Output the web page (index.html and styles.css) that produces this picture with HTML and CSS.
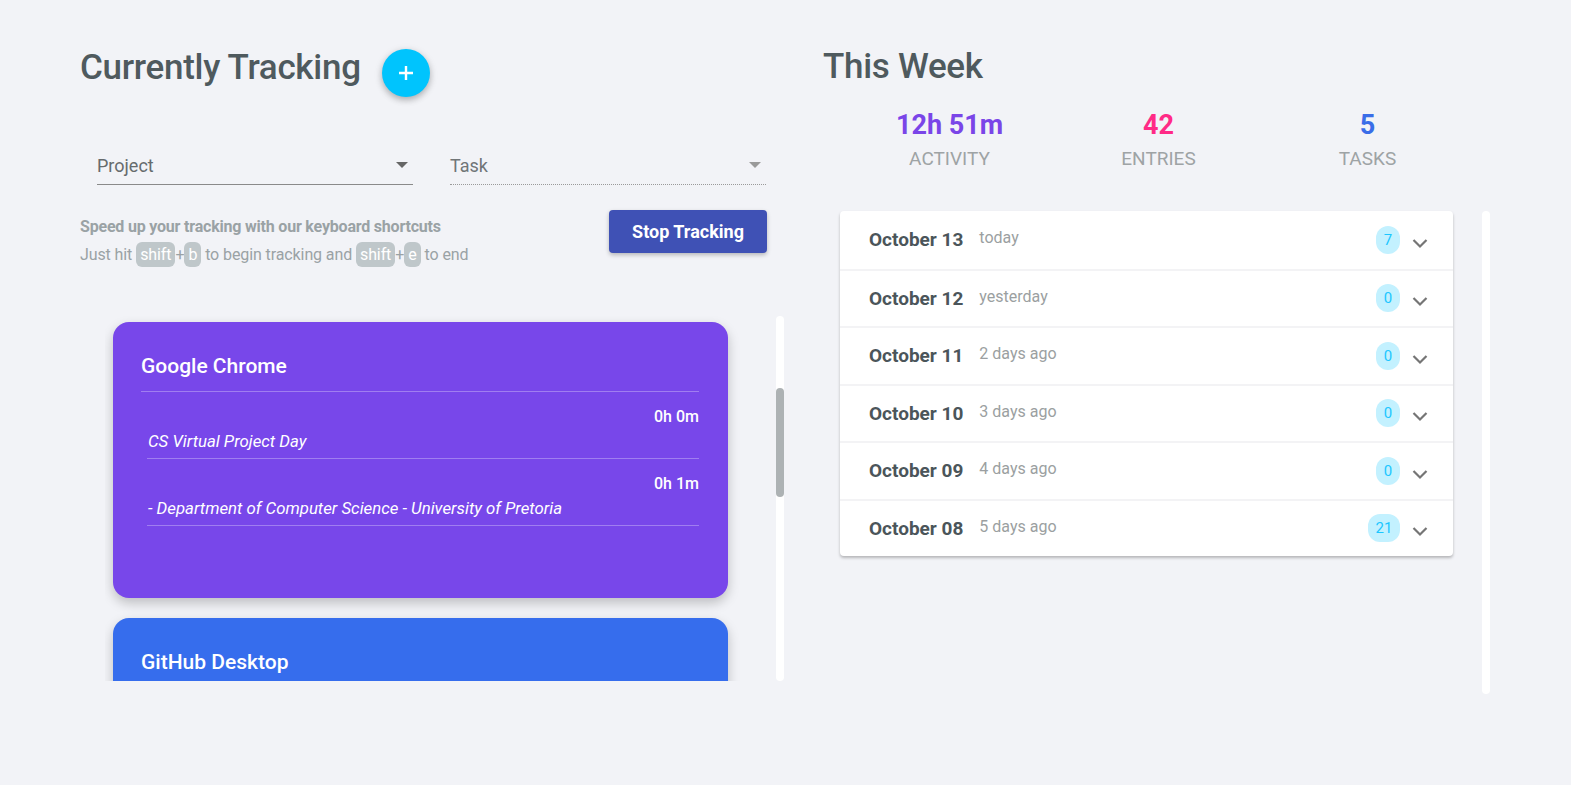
FILE: index.html
```html
<!DOCTYPE html>
<html>
<head>
<meta charset="utf-8">
<link rel="stylesheet" href="styles.css">
</head>
<body>
<div class="page">
  <section class="left">
    <div class="head-row">
      <h1 class="title">Currently Tracking</h1>
      <button class="fab">
        <svg width="20" height="20" viewBox="0 0 20 20"><path d="M10 3v14M3 10h14" stroke="#fff" stroke-width="2.4"/></svg>
      </button>
    </div>
    <div class="selects">
      <div class="select solid">
        <span class="sel-label">Project</span>
        <svg class="caret" width="12" height="6" viewBox="0 0 12 6"><path d="M0 0h12L6 6z" fill="#666"/></svg>
      </div>
      <div class="select dotted">
        <span class="sel-label">Task</span>
        <svg class="caret" width="12" height="6" viewBox="0 0 12 6"><path d="M0 0h12L6 6z" fill="#9a9a9a"/></svg>
      </div>
    </div>
    <div class="shortcut-row">
      <div class="shortcuts">
        <div class="sc-title">Speed up your tracking with our keyboard shortcuts</div>
        <div class="sc-line">Just hit <span class="kbd">shift</span>+<span class="kbd">b</span> to begin tracking and <span class="kbd">shift</span>+<span class="kbd">e</span> to end</div>
      </div>
      <button class="stop">Stop Tracking</button>
    </div>
    <div class="scroll-area">
      <div class="cards">
        <div class="card purple">
          <div class="card-title">Google Chrome</div>
          <div class="entry">
            <div class="entry-time">0h 0m</div>
            <div class="entry-name">CS Virtual Project Day</div>
          </div>
          <div class="entry">
            <div class="entry-time">0h 1m</div>
            <div class="entry-name">- Department of Computer Science - University of Pretoria</div>
          </div>
        </div>
        <div class="card blue">
          <div class="card-title">GitHub Desktop</div>
        </div>
      </div>
      <div class="track"><div class="thumb"></div></div>
    </div>
  </section>
  <section class="right">
    <h1 class="title week">This Week</h1>
    <div class="stats">
      <div class="stat"><div class="stat-val c-purple">12h 51m</div><div class="stat-label">Activity</div></div>
      <div class="stat"><div class="stat-val c-pink">42</div><div class="stat-label">Entries</div></div>
      <div class="stat"><div class="stat-val c-blue">5</div><div class="stat-label">Tasks</div></div>
    </div>
    <div class="list-row">
      <div class="days">
        <div class="day"><span class="date">October 13</span><span class="rel">today</span><span class="badge">7</span><svg class="chev" width="24" height="24" viewBox="0 0 24 24"><path d="M5.5 9 12 15.5 18.5 9" fill="none" stroke="#757575" stroke-width="2.2"/></svg></div>
        <div class="day"><span class="date">October 12</span><span class="rel">yesterday</span><span class="badge">0</span><svg class="chev" width="24" height="24" viewBox="0 0 24 24"><path d="M5.5 9 12 15.5 18.5 9" fill="none" stroke="#757575" stroke-width="2.2"/></svg></div>
        <div class="day"><span class="date">October 11</span><span class="rel">2 days ago</span><span class="badge">0</span><svg class="chev" width="24" height="24" viewBox="0 0 24 24"><path d="M5.5 9 12 15.5 18.5 9" fill="none" stroke="#757575" stroke-width="2.2"/></svg></div>
        <div class="day"><span class="date">October 10</span><span class="rel">3 days ago</span><span class="badge">0</span><svg class="chev" width="24" height="24" viewBox="0 0 24 24"><path d="M5.5 9 12 15.5 18.5 9" fill="none" stroke="#757575" stroke-width="2.2"/></svg></div>
        <div class="day"><span class="date">October 09</span><span class="rel">4 days ago</span><span class="badge">0</span><svg class="chev" width="24" height="24" viewBox="0 0 24 24"><path d="M5.5 9 12 15.5 18.5 9" fill="none" stroke="#757575" stroke-width="2.2"/></svg></div>
        <div class="day"><span class="date">October 08</span><span class="rel">5 days ago</span><span class="badge wide">21</span><svg class="chev" width="24" height="24" viewBox="0 0 24 24"><path d="M5.5 9 12 15.5 18.5 9" fill="none" stroke="#757575" stroke-width="2.2"/></svg></div>
      </div>
      <div class="track tall"></div>
    </div>
  </section>
</div>
</body>
</html>
```
FILE: styles.css
```css
* { box-sizing: border-box; }
html, body { margin: 0; padding: 0; }
body {
  background: #f2f3f7;
  font-family: Roboto, "Noto Sans", sans-serif;
  width: 1571px;
  height: 785px;
  overflow: hidden;
}
.page {
  display: flex;
  padding: 0 0 0 80px;
}
.left {
  width: 687px;
  flex: none;
}
.right {
  margin-left: 56px;
  width: 680px;
  flex: none;
}
.head-row {
  display: flex;
  align-items: center;
  height: 76px;
  margin-top: 30px;
}
.title {
  margin: 0;
  font-size: 35px;
  font-weight: 500;
  color: #4f5a5e;
  line-height: 42px;
  letter-spacing: -0.3px;
}
.fab {
  width: 48px;
  height: 48px;
  border-radius: 50%;
  background: #00c4fd;
  border: none;
  margin-left: 21px;
  margin-top: 9px;
  display: flex;
  align-items: center;
  justify-content: center;
  box-shadow: 0 3px 6px rgba(0,0,0,0.22), 0 2px 10px rgba(0,0,0,0.1);
  padding: 0;
}
.selects {
  display: flex;
  gap: 37px;
  margin-top: 34px;
  padding-left: 17px;
}
.select {
  width: 316px;
  height: 45px;
  display: flex;
  align-items: center;
  justify-content: space-between;
  padding: 6px 5px 0 0;
}
.select.solid { border-bottom: 1px solid #8a8a8a; }
.select.dotted { border-bottom: 1px dotted #9a9a9a; }
.sel-label {
  font-size: 18px;
  color: #666b6d;
}
.select.dotted .sel-label { color: #707577; }
.shortcut-row {
  display: flex;
  justify-content: space-between;
  align-items: flex-start;
  margin-top: 25px;
}
.sc-title {
  font-size: 16px;
  font-weight: 700;
  color: #9aa2a5;
  margin-top: 7px;
  line-height: 20px;
  letter-spacing: -0.2px;
}
.sc-line {
  font-size: 16px;
  color: #9aa2a5;
  margin-top: 5px;
  line-height: 26px;
  letter-spacing: -0.1px;
}
.kbd {
  display: inline-block;
  background: #bfc7ca;
  color: #fff;
  border-radius: 6px;
  padding: 0 4px;
  line-height: 25px;
}
.stop {
  background: #3f51b5;
  color: #fff;
  border: none;
  border-radius: 4px;
  width: 158px;
  height: 43px;
  font-family: Roboto, sans-serif;
  font-size: 18px;
  font-weight: 700;
  box-shadow: 0 2px 4px rgba(0,0,0,0.25);
  padding: 0;
}
.scroll-area {
  display: flex;
  margin-top: 48px;
  margin-left: 25px;
  height: 365px;
  width: 680px;
}
.cards {
  flex: none;
  width: 663px;
  height: 365px;
  overflow: hidden;
  padding: 6px 30px 0 8px;
}
.card {
  width: 615px;
  border-radius: 16px;
  color: #fff;
  box-shadow: 0 5px 12px rgba(0,0,0,0.22);
  padding: 32px 29px 0 28px;
  margin-bottom: 20px;
}
.card.purple { background: #7847ea; height: 276px; }
.card.blue { background: #366ded; height: 120px; }
.card-title {
  font-size: 21px;
  font-weight: 500;
  line-height: 24px;
  padding-bottom: 13px;
  border-bottom: 1px solid rgba(255,255,255,0.3);
}
.card.blue .card-title { border-bottom: none; }
.entry {
  margin-left: 6px;
  padding: 13px 0 5px;
  border-bottom: 1px solid rgba(255,255,255,0.3);
}
.entry-time {
  text-align: right;
  font-size: 16px;
  font-weight: 500;
  line-height: 24px;
}
.entry-name {
  font-size: 16.8px;
  font-style: italic;
  line-height: 24px;
  padding-left: 1px;
}
.track {
  flex: none;
  width: 8px;
  margin-left: 8px;
  background: #fff;
  border-radius: 4px;
  height: 365px;
  padding-top: 72px;
}
.thumb {
  height: 109px;
  background: #adb2b4;
  border-radius: 4px;
}
.week {
  margin-top: 46px;
}
.stats {
  display: grid;
  grid-template-columns: repeat(3, 209px);
  margin-left: 22px;
  margin-top: 22px;
}
.stat { text-align: center; }
.stat-val {
  font-size: 27px;
  font-weight: 700;
  line-height: 30px;
}
.stat-label {
  font-size: 19px;
  color: #9ea3a5;
  text-transform: uppercase;
  line-height: 24px;
  margin-top: 7px;
}
.c-purple { color: #7a45e8; }
.c-pink { color: #ff2a86; }
.c-blue { color: #3a6de8; }
.list-row {
  display: flex;
  margin-top: 40px;
}
.days {
  width: 613px;
  margin-left: 17px;
  background: #fff;
  border-radius: 4px;
  box-shadow: 0 2px 3px rgba(0,0,0,0.25);
  align-self: flex-start;
  flex: none;
}
.day {
  height: 57.5px;
  display: flex;
  align-items: center;
  padding: 0 21px 0 29px;
  border-top: 2px solid #f3f3f5;
}
.day:first-child { border-top: none; }
.date {
  font-size: 19px;
  font-weight: 700;
  color: #4b555a;
}
.rel {
  font-size: 16px;
  color: #9b9fa1;
  margin-left: 16px;
  margin-bottom: 4px;
  flex: 1;
}
.badge {
  min-width: 24px;
  height: 28px;
  border-radius: 12px;
  background: #c3f1ff;
  color: #1cc6ff;
  font-size: 15px;
  display: flex;
  align-items: center;
  justify-content: center;
  padding: 0 4px;
  margin-right: 8px;
}
.badge.wide { min-width: 32px; }
.chev { margin-top: 6px; }
.track.tall {
  height: 483px;
  margin-left: 29px;
  padding: 0;
}
```
